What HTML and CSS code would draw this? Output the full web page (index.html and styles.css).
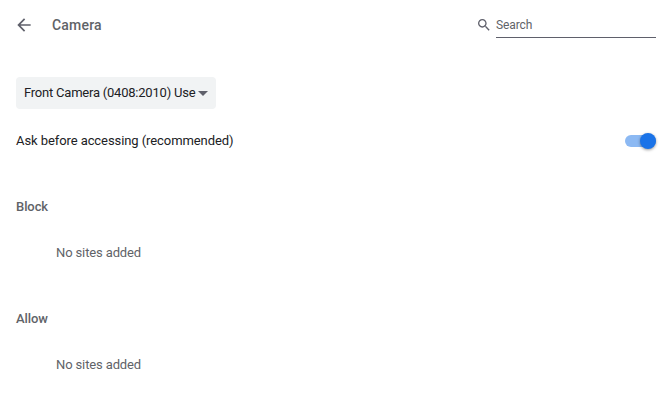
FILE: index.html
```html
<!DOCTYPE html>
<html lang="en">
<head>
<meta charset="utf-8">
<title>Camera</title>
<link rel="stylesheet" href="styles.css">
</head>
<body>
<header class="header">
  <svg class="back" viewBox="0 0 24 24"><path d="M20 11H7.83l5.59-5.59L12 4l-8 8 8 8 1.41-1.41L7.83 13H20v-2z"/></svg>
  <h1 class="title">Camera</h1>
  <svg class="search-icon" viewBox="0 0 24 24"><path d="M15.5 14h-.79l-.28-.27C15.41 12.59 16 11.11 16 9.5 16 5.91 13.09 3 9.5 3S3 5.91 3 9.5 5.91 16 9.5 16c1.61 0 3.09-.59 4.23-1.57l.27.28v.79l5 4.99L20.49 19l-4.99-5zm-6 0C7.01 14 5 11.99 5 9.5S7.01 5 9.5 5 14 7.01 14 9.5 11.99 14 9.5 14z"/></svg>
  <div class="search">Search</div>
</header>
<main class="main">
  <div class="select">
    <span class="select-label">Front Camera (0408:2010) Use</span>
    <svg class="arrow" viewBox="0 0 10 5"><path d="M0 0h10L5 5z"/></svg>
  </div>
  <div class="row">
    <span>Ask before accessing (recommended)</span>
    <span class="toggle"><span class="knob"></span></span>
  </div>
  <section class="list">
    <h2 class="heading">Block</h2>
    <p class="empty">No sites added</p>
  </section>
  <section class="list">
    <h2 class="heading">Allow</h2>
    <p class="empty">No sites added</p>
  </section>
</main>
</body>
</html>
```
FILE: styles.css
```css
* { box-sizing: border-box; }
body {
  margin: 0;
  background: #fff;
  color: #202124;
  font: 13px/20px Roboto, sans-serif;
  letter-spacing: -0.08px;
}
.header {
  display: flex;
  align-items: center;
  height: 50px;
  padding: 0 13px 0 14px;
}
.back { width: 20px; height: 20px; fill: #5f606b; }
.title {
  flex: 1;
  margin: 0 0 0 18px;
  color: #5f6368;
  font-size: 14px;
  font-weight: 500;
  letter-spacing: 0.2px;
}
.search-icon { width: 16px; height: 16px; margin-right: 4px; fill: #5f606b; }
.search {
  width: 160px;
  height: 26px;
  border-bottom: 1px solid #5f606b;
  color: #5f6368;
  font-size: 12px;
  line-height: 26px;
  letter-spacing: -0.1px;
}
.main { padding: 27px 13px 0 16px; }
.select {
  display: flex;
  align-items: center;
  width: 200px;
  height: 32px;
  padding: 0 8px;
  border-radius: 4px;
  background: #f1f3f4;
}
.select-label {
  width: 174px;
  white-space: nowrap;
  letter-spacing: -0.22px;
}
.arrow { width: 10px; height: 5px; fill: #5f606b; }
.row {
  display: flex;
  align-items: center;
  justify-content: space-between;
  height: 64px;
}
.toggle {
  display: flex;
  align-items: center;
  justify-content: flex-end;
  width: 31px;
  height: 12px;
  border-radius: 6px;
  background: #8cb9f3;
}
.knob {
  flex: none;
  width: 16px;
  height: 16px;
  border-radius: 50%;
  background: #1a73e8;
  box-shadow: 0 1px 3px rgba(0, 0, 0, .4);
}
.list { height: 112px; padding-top: 24px; color: #5f6368; }
.heading { margin: 0; font-size: 13px; font-weight: 500; }
.empty { margin: 26px 0 0 40px; letter-spacing: -0.13px; }
```
